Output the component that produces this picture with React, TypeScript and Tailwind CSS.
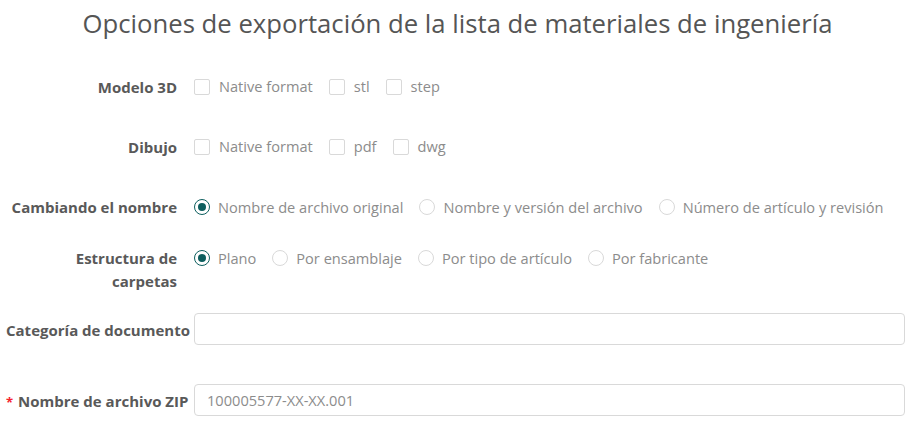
const font = { fontFamily: "'Open Sans', 'Noto Sans', sans-serif" };

function Check({ label }: { label: string }) {
  return (
    <label className="flex items-center gap-[9px] mr-4">
      <span className="w-[16px] h-[16px] rounded-[2px] border border-[#d9d9d9] bg-white" />
      <span className="text-[#8c8c8c]">{label}</span>
    </label>
  );
}

function Radio({ label, checked }: { label: string; checked?: boolean }) {
  return (
    <label className="flex items-center gap-[8px] mr-4">
      {checked ? (
        <span className="w-[16px] h-[16px] rounded-full border border-[#0d5e5e] bg-white flex items-center justify-center">
          <span className="w-[8px] h-[8px] rounded-full bg-[#0d5e5e]" />
        </span>
      ) : (
        <span className="w-[16px] h-[16px] rounded-full border border-[#d9d9d9] bg-white" />
      )}
      <span className="text-[#8c8c8c]">{label}</span>
    </label>
  );
}

function Row({ label, children, className = "" }: { label: React.ReactNode; children: React.ReactNode; className?: string }) {
  return (
    <div className={`flex items-center ${className}`}>
      <div className="w-[194px] shrink-0 pr-[17px] text-right font-bold text-[15px] text-[#595959] leading-[23px]">
        {label}
      </div>
      <div className="flex items-center flex-1">{children}</div>
    </div>
  );
}

export default function App() {
  return (
    <div className="w-[913px] h-[423px] bg-white text-[14.6px] overflow-hidden" style={font}>
      <h1 className="flex items-center justify-center h-[48px] text-[25.7px] text-[#555] pl-[2px] mb-[10px]">
        Opciones de exportación de la lista de materiales de ingeniería
      </h1>
      <div className="flex flex-col">
        <Row label="Modelo 3D" className="h-[58px]">
          <Check label="Native format" />
          <Check label="stl" />
          <Check label="step" />
        </Row>
        <Row label="Dibujo" className="h-[62px]">
          <Check label="Native format" />
          <Check label="pdf" />
          <Check label="dwg" />
        </Row>
        <Row label="Cambiando el nombre" className="h-[59px]">
          <Radio label="Nombre de archivo original" checked />
          <Radio label="Nombre y versión del archivo" />
          <Radio label="Número de artículo y revisión" />
        </Row>
        <div className="flex items-start h-[76px] pt-[10px]">
          <div className="w-[194px] shrink-0 pr-[17px] text-right font-bold text-[15px] text-[#595959] leading-[23px]">
            Estructura de
            <br />
            carpetas
          </div>
          <div className="flex items-center h-[23px]">
            <Radio label="Plano" checked />
            <Radio label="Por ensamblaje" />
            <Radio label="Por tipo de artículo" />
            <Radio label="Por fabricante" />
          </div>
        </div>
        <div className="flex items-center h-[32px]">
          <div className="w-[194px] shrink-0 pl-[6px] pt-[2px] font-bold text-[15px] text-[#595959] whitespace-nowrap">
            Categoría de documento
          </div>
          <input className="w-[711px] h-[32px] rounded-[4px] border border-[#d9d9d9] px-3 outline-none" />
        </div>
        <div className="flex items-center h-[32px] mt-[39px]">
          <div className="w-[194px] shrink-0 pl-[6px] pt-[2px] font-bold text-[15px] text-[#595959] whitespace-nowrap">
            <span className="text-[#f5222d] text-[13px] mr-[5px]">*</span>Nombre de archivo ZIP
          </div>
          <input
            className="w-[711px] h-[32px] rounded-[4px] border border-[#d9d9d9] px-3 text-[#8c8c8c] outline-none"
            defaultValue="100005577-XX-XX.001"
          />
        </div>
      </div>
    </div>
  );
}
